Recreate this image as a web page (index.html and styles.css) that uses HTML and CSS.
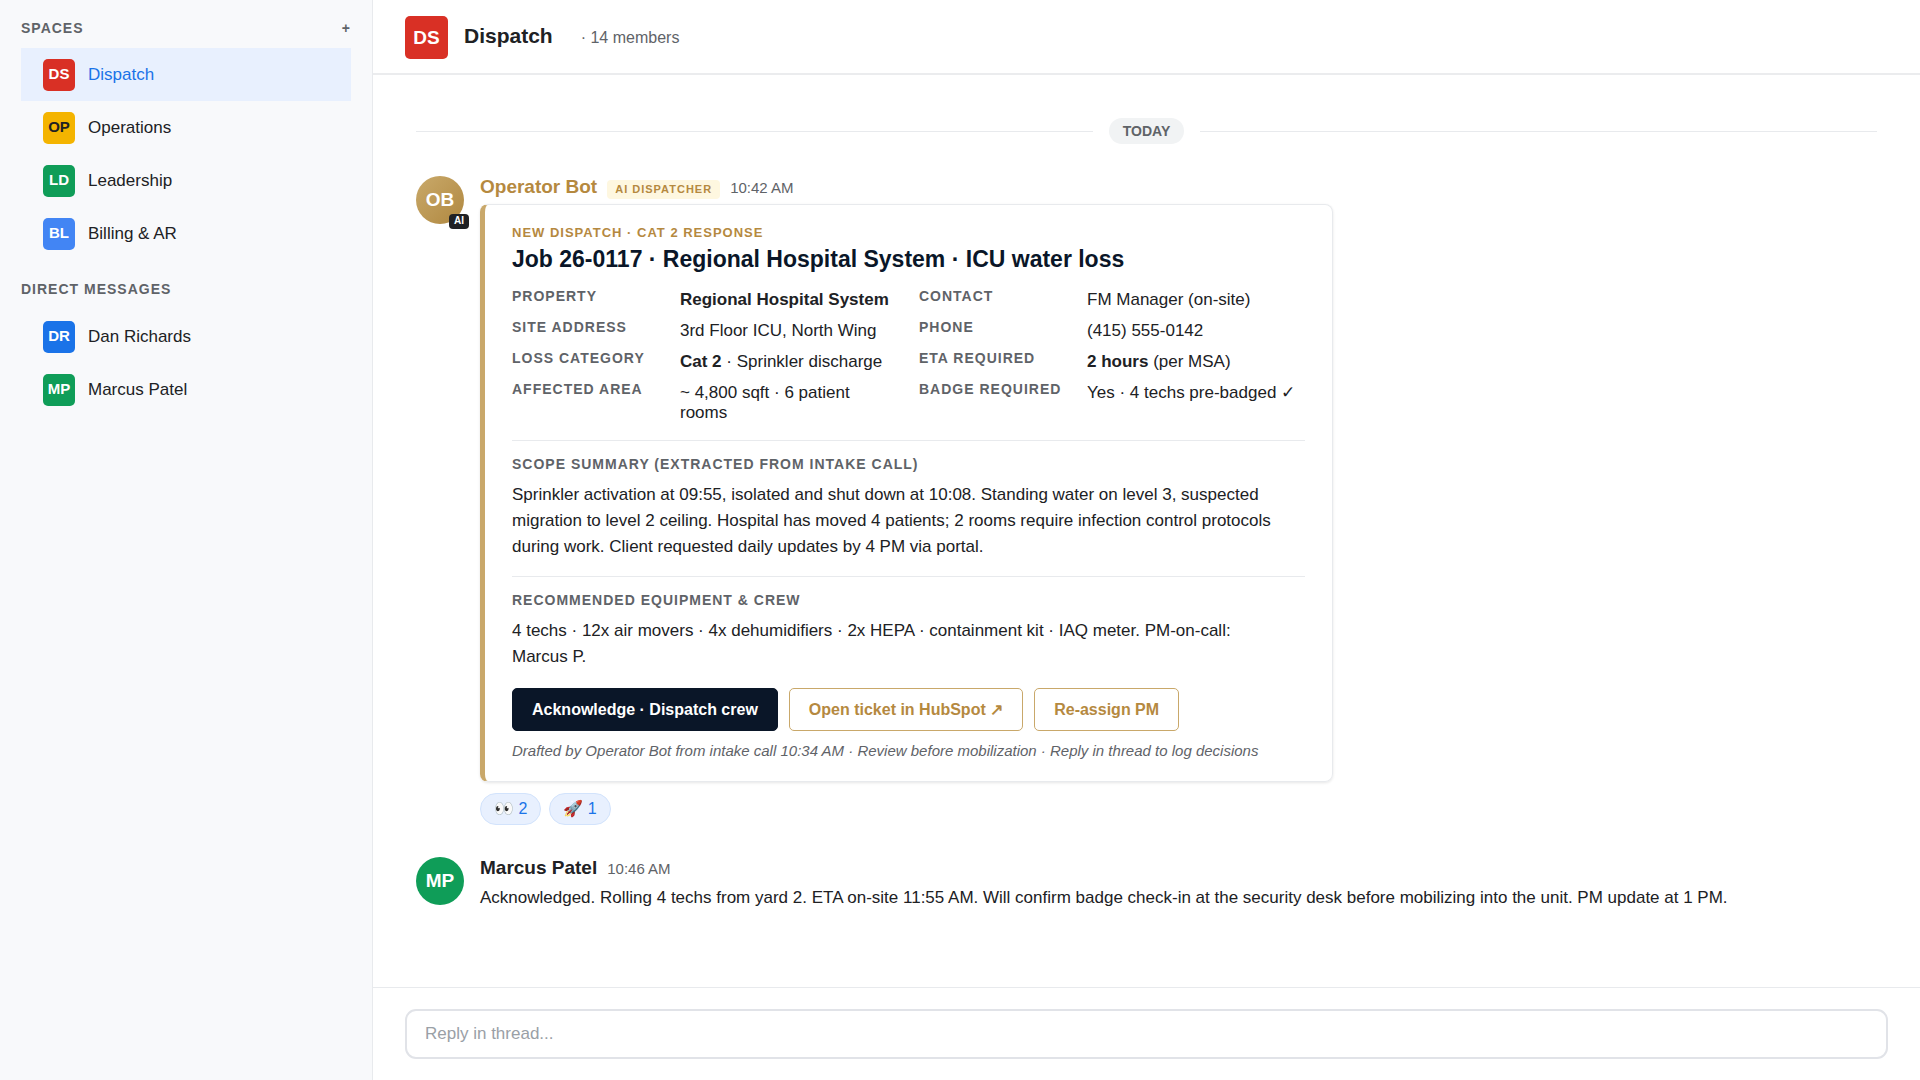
FILE: index.html
```html
<!DOCTYPE html>
<html lang="en">
<head>
  <meta charset="utf-8">
  <meta name="viewport" content="width=device-width, initial-scale=1">
  <title>Dispatch</title>
  <link rel="stylesheet" href="styles.css">
</head>
<body>
  <div class="app">
    <aside class="sidebar">
      <div class="side-head">
        <h2 class="side-title">Spaces</h2>
        <button class="side-add" type="button" aria-label="Add space">+</button>
      </div>
      <nav class="side-list" aria-label="Spaces">
        <a class="side-item active" href="#dispatch" aria-current="page"><span class="tile red">DS</span>Dispatch</a>
        <a class="side-item" href="#operations"><span class="tile yellow">OP</span>Operations</a>
        <a class="side-item" href="#leadership"><span class="tile green">LD</span>Leadership</a>
        <a class="side-item" href="#billing"><span class="tile sky">BL</span>Billing &amp; AR</a>
      </nav>
      <div class="side-head">
        <h2 class="side-title">Direct messages</h2>
      </div>
      <nav class="side-list" aria-label="Direct messages">
        <a class="side-item" href="#dan"><span class="tile blue">DR</span>Dan Richards</a>
        <a class="side-item" href="#marcus"><span class="tile green">MP</span>Marcus Patel</a>
      </nav>
    </aside>

    <main class="main">
      <header class="topbar">
        <span class="tile tile-lg red">DS</span>
        <div class="topbar-text">
          <h1 class="topbar-title">Dispatch</h1>
          <span class="topbar-meta">· 14 members</span>
        </div>
      </header>

      <section class="thread" aria-label="Messages">
        <div class="day"><span class="day-label">TODAY</span></div>

        <article class="message">
          <div class="avatar bot">OB<span class="avatar-tag">AI</span></div>
          <div class="message-body">
            <div class="message-head">
              <span class="author author-bot">Operator Bot</span>
              <span class="role">AI DISPATCHER</span>
              <time class="time">10:42 AM</time>
            </div>

            <div class="card">
              <p class="eyebrow">NEW DISPATCH · CAT 2 RESPONSE</p>
              <h2 class="card-title">Job 26-0117 · Regional Hospital System · ICU water loss</h2>
              <dl class="facts">
                <dt>PROPERTY</dt><dd><strong>Regional Hospital System</strong></dd>
                <dt>CONTACT</dt><dd>FM Manager (on-site)</dd>
                <dt>SITE ADDRESS</dt><dd>3rd Floor ICU, North Wing</dd>
                <dt>PHONE</dt><dd>(415) 555-0142</dd>
                <dt>LOSS CATEGORY</dt><dd><strong>Cat 2</strong> · Sprinkler discharge</dd>
                <dt>ETA REQUIRED</dt><dd><strong>2 hours</strong> (per MSA)</dd>
                <dt>AFFECTED AREA</dt><dd>~ 4,800 sqft · 6 patient rooms</dd>
                <dt>BADGE REQUIRED</dt><dd>Yes · 4 techs pre-badged ✓</dd>
              </dl>
              <section class="block">
                <h3 class="block-title">SCOPE SUMMARY (EXTRACTED FROM INTAKE CALL)</h3>
                <p class="block-text">Sprinkler activation at 09:55, isolated and shut down at 10:08. Standing water on level 3, suspected migration to level 2 ceiling. Hospital has moved 4 patients; 2 rooms require infection control protocols during work. Client requested daily updates by 4 PM via portal.</p>
              </section>
              <section class="block">
                <h3 class="block-title">RECOMMENDED EQUIPMENT &amp; CREW</h3>
                <p class="block-text">4 techs · 12x air movers · 4x dehumidifiers · 2x HEPA · containment kit · IAQ meter. PM-on-call: Marcus P.</p>
              </section>
              <div class="actions">
                <button class="btn btn-primary" type="button">Acknowledge · Dispatch crew</button>
                <button class="btn" type="button">Open ticket in HubSpot ↗</button>
                <button class="btn" type="button">Re-assign PM</button>
              </div>
              <p class="footnote">Drafted by Operator Bot from intake call 10:34 AM · Review before mobilization · Reply in thread to log decisions</p>
            </div>

            <div class="reactions">
              <button class="reaction" type="button">👀 2</button>
              <button class="reaction" type="button">🚀 1</button>
            </div>
          </div>
        </article>

        <article class="message">
          <div class="avatar green">MP</div>
          <div class="message-body">
            <div class="message-head">
              <span class="author">Marcus Patel</span>
              <time class="time">10:46 AM</time>
            </div>
            <p class="message-text">Acknowledged. Rolling 4 techs from yard 2. ETA on-site 11:55 AM. Will confirm badge check-in at the security desk before mobilizing into the unit. PM update at 1 PM.</p>
          </div>
        </article>
      </section>

      <form class="composer">
        <input class="composer-input" type="text" placeholder="Reply in thread..." aria-label="Reply in thread">
      </form>
    </main>
  </div>
</body>
</html>
```
FILE: styles.css
```css
* {
  box-sizing: border-box;
}

body,
h1,
h2,
h3,
p,
dl,
dd {
  margin: 0;
}

body {
  font-family: "Liberation Sans", Arial, sans-serif;
  font-size: 17px;
  line-height: 20px;
  color: #202124;
  background: #fff;
}

button,
input {
  font: inherit;
}

.app {
  display: flex;
  min-height: 100vh;
}

/* Sidebar */

.sidebar {
  flex: 0 0 373px;
  padding: 8px 21px;
  background: #f8f9fb;
  border-right: 1px solid #e8eaed;
}

.side-head {
  display: flex;
  align-items: center;
  justify-content: space-between;
  height: 40px;
}

.side-list + .side-head {
  height: 50px;
  padding-top: 8px;
}

.side-title,
.side-add {
  font-size: 14px;
  font-weight: 700;
  letter-spacing: 1px;
  text-transform: uppercase;
  color: #5f6368;
}

.side-add {
  padding: 0;
  background: none;
  border: 0;
}

.side-item {
  display: flex;
  align-items: center;
  gap: 13px;
  height: 53px;
  padding: 1px 22px 0;
  color: #202124;
  text-decoration: none;
}

.side-item.active {
  color: #1a73e8;
  background: #e8f0fe;
}

.tile {
  display: flex;
  align-items: center;
  justify-content: center;
  width: 32px;
  height: 32px;
  padding-bottom: 2px;
  border-radius: 5px;
  font-size: 15px;
  font-weight: 700;
  color: #fff;
}

.tile-lg {
  width: 43px;
  height: 43px;
  padding: 0;
  font-size: 19px;
}

.red { background: #d93025; }
.yellow { background: #f4b400; color: #202124; }
.green { background: #0f9d58; }
.sky { background: #4285f4; }
.blue { background: #1a73e8; }

/* Main column */

.main {
  flex: 1;
  min-width: 0;
  display: flex;
  flex-direction: column;
}

.topbar {
  display: flex;
  align-items: center;
  gap: 16px;
  padding: 16px 32px 14px;
  border-bottom: 2px solid #ebecee;
}

.topbar-text {
  display: flex;
  align-items: baseline;
  gap: 28px;
  padding-bottom: 4px;
}

.topbar-title {
  font-size: 21px;
  line-height: 24px;
}

.topbar-meta {
  font-size: 16px;
  color: #5f6368;
}

.thread {
  flex: 1;
  padding: 43px;
}

.day {
  display: flex;
  align-items: center;
  gap: 16px;
  margin-bottom: 32px;
}

.day::before,
.day::after {
  content: "";
  flex: 1;
  height: 1px;
  background: #e8eaed;
}

.day-label {
  padding: 3px 14px;
  border-radius: 13px;
  font-size: 14px;
  font-weight: 700;
  color: #5f6368;
  background: #f1f3f4;
}

.message {
  display: flex;
  align-items: flex-start;
  gap: 16px;
}

.message + .message {
  margin-top: 32px;
}

.avatar {
  position: relative;
  flex: none;
  display: flex;
  align-items: center;
  justify-content: center;
  width: 48px;
  height: 48px;
  border-radius: 50%;
  font-size: 19px;
  font-weight: 700;
  color: #fff;
}

.bot {
  background: linear-gradient(135deg, #c9a96a, #b08840);
}

.avatar-tag {
  position: absolute;
  right: -5px;
  bottom: -5px;
  padding: 0 5px 2px;
  border-radius: 4px;
  font-size: 10px;
  line-height: 13px;
  background: #202124;
}

.message-body {
  flex: 1;
  min-width: 0;
}

.message-head {
  display: flex;
  align-items: baseline;
  gap: 10px;
  height: 28px;
}

.author {
  font-size: 19px;
  font-weight: 700;
  line-height: 22px;
}

.author-bot {
  color: #b5893f;
}

.role {
  padding: 1px 8px 2px;
  border-radius: 4px;
  font-size: 11px;
  font-weight: 700;
  line-height: 16px;
  letter-spacing: 1px;
  color: #b5893f;
  background: #fef7e0;
}

.time {
  font-size: 15px;
  color: #5f6368;
}

.message-text {
  line-height: 26px;
}

/* Dispatch card */

.card {
  max-width: 853px;
  padding: 20px 27px;
  border: 1px solid #e8eaed;
  border-left: 5px solid #c9a86a;
  border-radius: 8px;
  box-shadow: 0 1px 3px rgba(0, 0, 0, 0.1);
}

.eyebrow {
  font-size: 13px;
  font-weight: 700;
  line-height: 16px;
  letter-spacing: 1px;
  color: #b5893f;
}

.card-title {
  margin-top: 4px;
  font-size: 23px;
  line-height: 28px;
  color: #0a1628;
}

.facts {
  display: grid;
  grid-template-columns: 147px 1fr 147px 1fr;
  gap: 11px 21px;
  margin: 17px 0;
}

.facts dt,
.block-title {
  font-size: 14px;
  font-weight: 700;
  line-height: 16px;
  letter-spacing: 1px;
  color: #5f6368;
}

.facts dt {
  line-height: 12px;
}

.block {
  padding: 15px 0 16px;
  border-top: 1px solid #e8eaed;
}

.block-text {
  margin-top: 10px;
  padding-right: 21px;
  line-height: 26px;
}

.actions {
  display: flex;
  flex-wrap: wrap;
  gap: 11px;
  margin-top: 2px;
}

.btn {
  height: 43px;
  padding: 0 19px;
  border: 1px solid #c9a86a;
  border-radius: 5px;
  font-size: 16px;
  font-weight: 700;
  color: #b5893f;
  background: #fff;
}

.btn-primary {
  border-color: #0a1628;
  color: #fff;
  background: #0a1628;
}

.footnote {
  margin-top: 10px;
  font-size: 15px;
  font-style: italic;
  color: #5f6368;
}

.reactions {
  display: flex;
  gap: 8px;
  margin-top: 11px;
}

.reaction {
  height: 32px;
  padding: 0 13px;
  border: 1px solid #d2e3fc;
  border-radius: 16px;
  font-size: 16px;
  color: #1a73e8;
  background: #e8f0fe;
}

/* Composer */

.composer {
  padding: 21px 32px;
  border-top: 1px solid #e8eaed;
}

.composer-input {
  display: block;
  width: 100%;
  height: 50px;
  padding: 0 18px;
  border: 2px solid #e1e3e8;
  border-radius: 11px;
  color: #202124;
  background: #fff;
}

.composer-input::placeholder {
  color: #9aa0a6;
}
```
